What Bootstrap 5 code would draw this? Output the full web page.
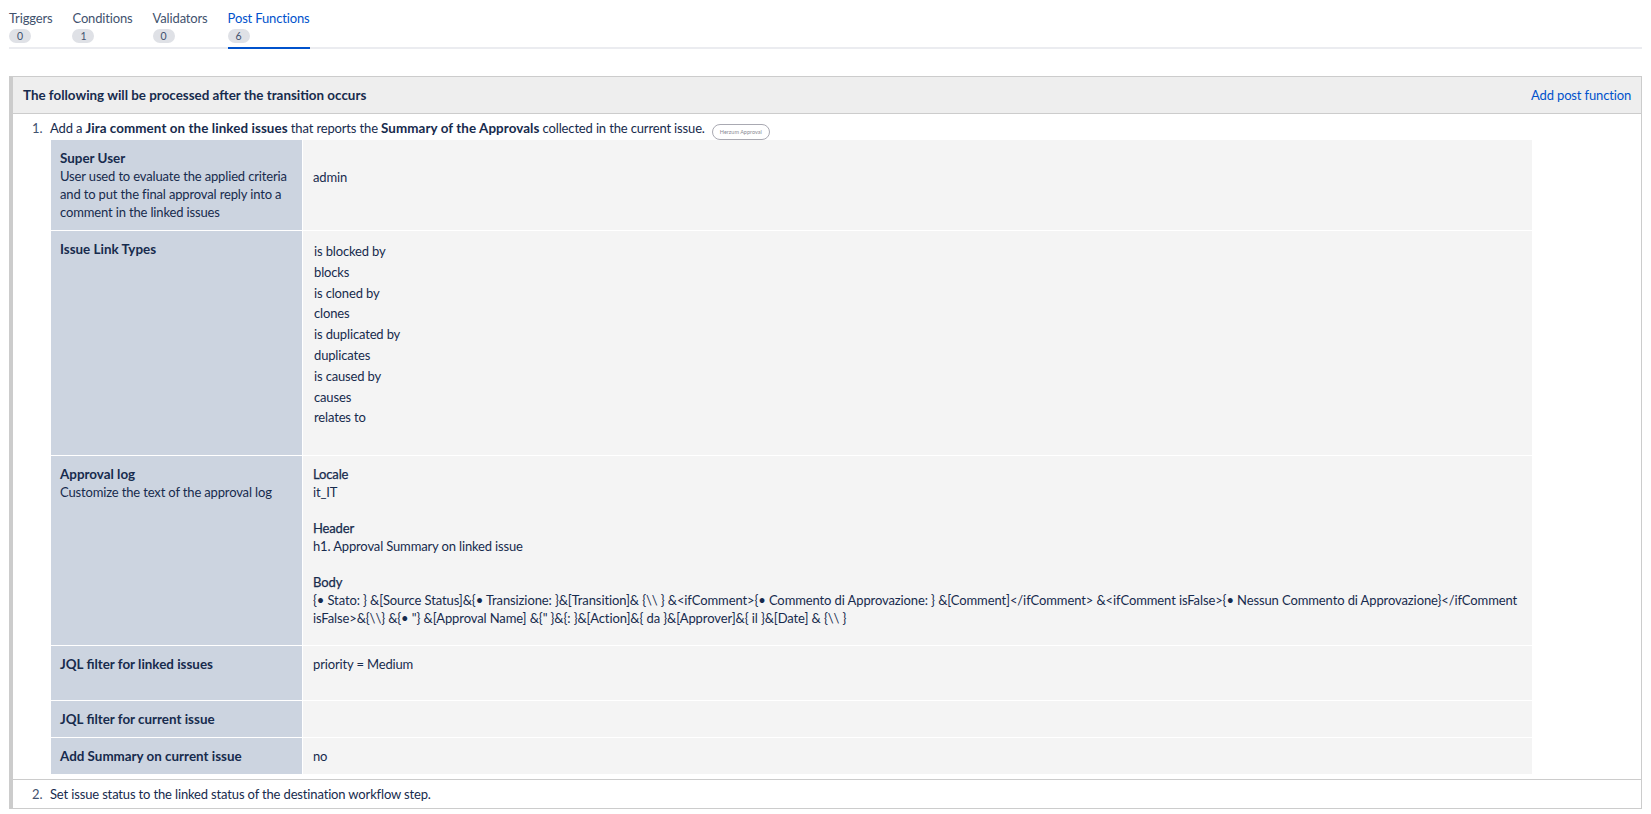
<!DOCTYPE html>
<html lang="en"><head><meta charset="utf-8"><title>Post Functions</title>
<link href="https://cdn.jsdelivr.net/npm/bootstrap@5.3.0/dist/css/bootstrap.min.css" rel="stylesheet">
<script src="https://cdn.jsdelivr.net/npm/bootstrap@5.3.0/dist/js/bootstrap.bundle.min.js"></script>
<style>
body{font-family:Lato,"Noto Sans",sans-serif;font-size:13px;letter-spacing:-.15px;line-height:18px;color:#172b4d;background:#fff;height:814px;overflow:hidden;padding:9px 9px 0 9px}
b,th,.wf-head>span{font-weight:700;font-size:13.4px;letter-spacing:0}
b{letter-spacing:.08px}
.wf-tabs{height:40px;border-bottom:2px solid #ebecf0;gap:20px;margin:0 0 27px}
.wf-tab{height:40px;line-height:18px;color:#42526e;white-space:nowrap}
.wf-tab.is-on{color:#0052cc;border-bottom:2px solid #0052cc}
.wf-count{display:block;width:22px;height:14px;margin-top:2px;border-radius:7px;background:#dfe1e6;color:#42526e;font-size:10.5px;letter-spacing:0;line-height:14px;text-align:center}
.wf-panel{border:1px solid #ccc;border-left:4px solid #ccc;border-bottom:0}
.wf-head{height:37px;background:#eee;border-bottom:1px solid #ccc;padding:0 10px 0 10px}
.wf-head a{color:#0052cc;text-decoration:none}
.wf-item{border-bottom:1px solid #ccc;padding:3px 0 5px 19px}
.wf-item-b{padding:4px 0 3px 19px;line-height:20.7px}
.wf-num{width:18px;flex:none;color:#42526e}
.wf-line{height:23px;line-height:23px}
.wf-tag{display:inline-block;height:16px;width:58px;margin-left:7px;border:1px solid #a9a9b2;border-radius:8px;font-size:5.5px;letter-spacing:0;line-height:14px;text-align:center;color:#8a8a94;vertical-align:-1px}
.wf-table{width:1481px;margin-left:1px;border-collapse:separate;border-spacing:0}
.wf-table th,.wf-table td{vertical-align:top;padding:9px 10px;border-bottom:1px solid #fff}
.wf-table tr:last-child th,.wf-table tr:last-child td{border-bottom:0}
.wf-table th{width:252px;padding:9px 6px 8px 9px;background:#ccd4e0;border-right:1px solid #fff}
.wf-table th span{font-weight:400;font-size:13px;letter-spacing:-.15px;display:block}
.wf-table td{background:#f4f4f4}
.wf-table td.wf-admin{padding-top:28px}
.wf-links{padding:1px 0 0 1px;line-height:20.8px}
.wf-sec{margin-bottom:18px}
.wf-label{-webkit-text-stroke:.25px #172b4d}
.wf-body{letter-spacing:-.11px}
</style></head><body>
<nav class="wf-tabs d-flex">
 <div class="wf-tab">Triggers<span class="wf-count">0</span></div>
 <div class="wf-tab">Conditions<span class="wf-count">1</span></div>
 <div class="wf-tab">Validators<span class="wf-count">0</span></div>
 <div class="wf-tab is-on">Post Functions<span class="wf-count">6</span></div>
</nav>
<section class="wf-panel">
 <div class="wf-head d-flex justify-content-between align-items-center"><span>The following will be processed after the transition occurs</span><a href="#">Add post function</a></div>
 <div class="wf-item d-flex">
  <span class="wf-num wf-line">1.</span>
  <div>
   <div class="wf-line">Add a <b>Jira comment on the linked issues</b> that reports the <b>Summary of the Approvals</b> collected in the current issue.<span class="wf-tag">Herzum Approval</span></div>
   <table class="wf-table">
    <tr style="height:91px"><th>Super User<span>User used to evaluate the applied criteria and to put the final approval reply into a comment in the linked issues</span></th><td class="wf-admin">admin</td></tr>
    <tr style="height:225px"><th>Issue Link Types</th><td><div class="wf-links">is blocked by<br>blocks<br>is cloned by<br>clones<br>is duplicated by<br>duplicates<br>is caused by<br>causes<br>relates to</div></td></tr>
    <tr style="height:190px"><th>Approval log<span>Customize the text of the approval log</span></th><td>
      <div class="wf-sec"><div class="wf-label">Locale</div>it_IT</div>
      <div class="wf-sec"><div class="wf-label">Header</div>h1. Approval Summary on linked issue</div>
      <div class="wf-body"><div class="wf-label">Body</div>{• Stato: } &amp;[Source Status]&amp;{• Transizione: }&amp;[Transition]&amp; {\\ } &amp;&lt;ifComment&gt;{• Commento di Approvazione: } &amp;[Comment]&lt;/ifComment&gt; &amp;&lt;ifComment isFalse&gt;{• Nessun Commento di Approvazione}&lt;/ifComment isFalse&gt;&amp;{\\} &amp;{• "} &amp;[Approval Name] &amp;{" }&amp;{: }&amp;[Action]&amp;{ da }&amp;[Approver]&amp;{ il }&amp;[Date] &amp; {\\ }</div>
    </td></tr>
    <tr style="height:55px"><th>JQL filter for linked issues</th><td>priority = Medium</td></tr>
    <tr style="height:37px"><th>JQL filter for current issue</th><td></td></tr>
    <tr style="height:36px"><th>Add Summary on current issue</th><td>no</td></tr>
   </table>
  </div>
 </div>
 <div class="wf-item wf-item-b d-flex"><span class="wf-num">2.</span><div>Set issue status to the linked status of the destination workflow step.</div></div>
</section>
</body></html>
